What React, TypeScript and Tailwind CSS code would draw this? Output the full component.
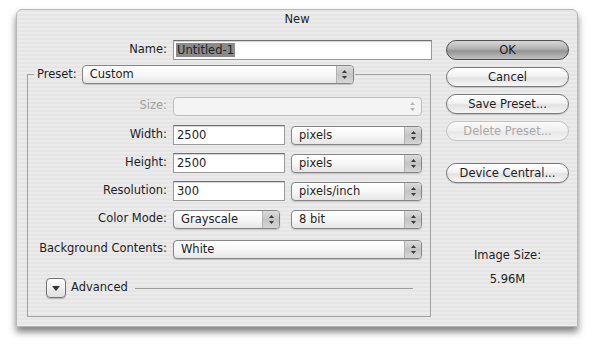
import React from "react";

const Arrows = ({ disabled = false }: { disabled?: boolean }) => (
  <svg width="7" height="11" viewBox="0 0 7 11">
    <path d="M3.5 1 L6 4 L1 4 Z" fill={disabled ? "#b5b5b5" : "#3a3a3a"} />
    <path d="M3.5 10 L6 7 L1 7 Z" fill={disabled ? "#b5b5b5" : "#3a3a3a"} />
  </svg>
);

const Select = ({ value, width, disabled = false }: { value?: string; width: string; disabled?: boolean }) => (
  <div
    className={`flex h-[19px] overflow-hidden rounded-[4px] border ${width} ${
      disabled
        ? "border-[#bdbdbd] bg-[#f4f4f4]"
        : "border-[#868686] bg-linear-to-b from-white via-[#f7f7f7] to-[#e6e6e6] shadow-[0_1px_1px_rgba(0,0,0,0.18)]"
    }`}
  >
    <span className="flex-1 truncate pl-[7px] leading-[17px]">{value}</span>
    <span
      className={`flex w-[17px] items-center justify-center ${
        disabled ? "" : "border-l border-[#b2b2b2] bg-linear-to-b from-[#dcdcdc] via-[#c4c4c4] to-[#d6d6d6]"
      }`}
    >
      <Arrows disabled={disabled} />
    </span>
  </div>
);

const TextField = ({ value, width }: { value: string; width: string }) => (
  <div
    className={`h-[20px] border border-[#9a9a9a] border-t-[#707070] bg-white pl-[3px] leading-[18px] shadow-[inset_0_1px_1px_rgba(0,0,0,0.18)] ${width}`}
  >
    {value}
  </div>
);

const Button = ({ label, primary = false, disabled = false, className = "" }: { label: string; primary?: boolean; disabled?: boolean; className?: string }) => (
  <div
    className={`h-[20px] rounded-full border text-center leading-[18px] ${className} ${
      primary
        ? "border-[#4f4f4f] bg-[linear-gradient(#d8d8d8,#b0b0b0_45%,#939393_55%,#c2c2c2)] text-[#1c1c1c]"
        : disabled
        ? "border-[#c2c2c2] bg-[linear-gradient(#fafafa,#f0f0f0_50%,#e8e8e8_55%,#f4f4f4)] text-[#a8a8a8]"
        : "border-[#7a7a7a] bg-[linear-gradient(#ffffff,#f3f3f3_45%,#e2e2e2_55%,#f6f6f6)] shadow-[0_1px_1px_rgba(0,0,0,0.15)]"
    }`}
  >
    {label}
  </div>
);

const Row = ({ label, disabled = false, className = "", children }: { label: string; disabled?: boolean; className?: string; children: React.ReactNode }) => (
  <div className={`flex h-[20px] items-center ${className}`}>
    <span className={`w-[139px] whitespace-nowrap text-right ${disabled ? "text-[#a0a0a0]" : ""}`}>{label}</span>
    <div className="ml-[6px] flex items-center gap-[6px]">{children}</div>
  </div>
);

export default function App() {
  return (
    <div className="h-[350px] w-[600px] bg-white pl-[16px] pt-[9px] font-['DejaVu_Sans',sans-serif] text-[11.5px] text-[#1e1e1e]">
      <div className="flex h-[318px] w-[562px] flex-col rounded-t-[6px] border border-[#b8b8b8] bg-[repeating-linear-gradient(0deg,#ebebeb_0px,#ebebeb_2px,#e5e5e5_2px,#e5e5e5_4px)] shadow-[0_5px_7px_rgba(0,0,0,0.5)]">
        <div className="h-[18px] pt-[1px] text-center leading-[17px]">New</div>

        <div className="flex pt-[12px]">
          {/* form column */}
          <div className="w-[415px]">
            <div className="flex h-[20px] items-center">
              <span className="w-[150px] text-right">Name:</span>
              <div className="ml-[6px] h-[20px] w-[259px] border border-[#9a9a9a] border-t-[#707070] bg-white pl-[2px] leading-[18px] shadow-[inset_0_1px_1px_rgba(0,0,0,0.18)]">
                <span className="bg-[#8b8b8b] px-[1px] text-[#222]">Untitled-1</span>
              </div>
            </div>

            <fieldset className="ml-[10px] mt-[5px] w-[404px] border border-[#a2a2a2] pb-[18px]">
              <legend className="ml-[6px] flex items-center pl-[3px] pr-[1px]">
                <span>Preset:</span>
                <Select value="Custom" width="ml-[5px] w-[272px]" />
              </legend>

              <div className="pt-[12px]">
                <Row label="Size:" disabled>
                  <Select width="w-[249px]" disabled />
                </Row>
                <Row label="Width:" className="mt-[9px]">
                  <TextField value="2500" width="w-[112px]" />
                  <Select value="pixels" width="w-[131px]" />
                </Row>
                <Row label="Height:" className="mt-[8px]">
                  <TextField value="2500" width="w-[112px]" />
                  <Select value="pixels" width="w-[131px]" />
                </Row>
                <Row label="Resolution:" className="mt-[8px]">
                  <TextField value="300" width="w-[112px]" />
                  <Select value="pixels/inch" width="w-[131px]" />
                </Row>
                <Row label="Color Mode:" className="mt-[8px]">
                  <Select value="Grayscale" width="w-[107px]" />
                  <Select value="8 bit" width="ml-[5px] w-[131px]" />
                </Row>
                <Row label="Background Contents:" className="mt-[10px]">
                  <Select value="White" width="w-[249px]" />
                </Row>

                <div className="mt-[19px] flex h-[20px] items-center">
                  <div className="ml-[18px] flex h-[20px] w-[20px] items-center justify-center rounded-[4px] border border-[#747474] bg-linear-to-b from-white to-[#e0e0e0] shadow-[0_1px_1px_rgba(0,0,0,0.2)]">
                    <svg width="8" height="5" viewBox="0 0 8 5">
                      <path d="M0 0 L8 0 L4 5 Z" fill="#333" />
                    </svg>
                  </div>
                  <span className="ml-[5px]">Advanced</span>
                  <div className="ml-[7px] mr-[17px] h-px flex-1 bg-[#9c9c9c]" />
                </div>
              </div>
            </fieldset>
          </div>

          {/* buttons column */}
          <div className="ml-[14px] flex w-[123px] flex-col">
            <Button label="OK" primary />
            <Button label="Cancel" className="mt-[7px]" />
            <Button label="Save Preset..." className="mt-[7px]" />
            <Button label="Delete Preset..." disabled className="mt-[7px]" />
            <Button label="Device Central..." className="mt-[22px]" />
            <div className="mt-[65px] text-center leading-[14px]">Image Size:</div>
            <div className="mt-[10px] text-center leading-[14px]">5.96M</div>
          </div>
        </div>
      </div>
    </div>
  );
}
